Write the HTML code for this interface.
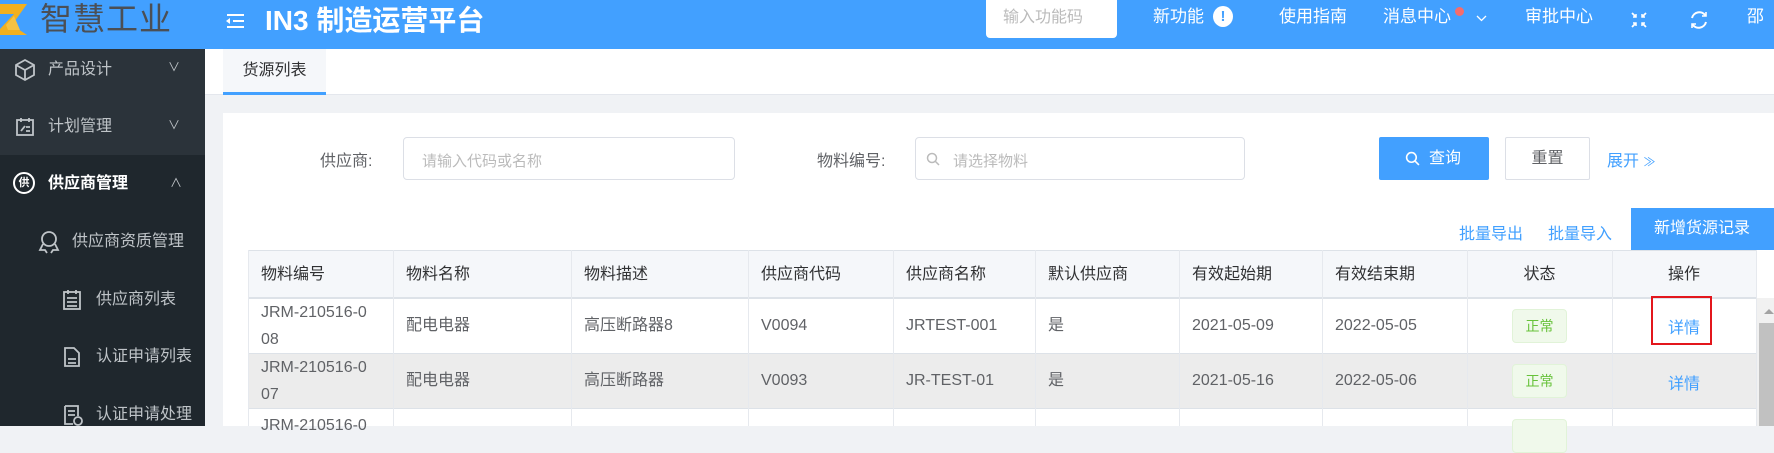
<!DOCTYPE html>
<html><head><meta charset="utf-8"><style>
*{box-sizing:border-box;margin:0;padding:0}
body{width:1774px;height:426px;overflow:hidden;position:relative;font-family:"Liberation Sans","Noto Sans CJK SC",sans-serif;background:#f0f2f5;color:#606266}
.a{position:absolute}
.hdr{left:0;top:0;width:1774px;height:49px;background:#42a0ff}
.side{left:0;top:49px;width:205px;height:377px;background:#1f272d}
.si{position:absolute;font-size:16px;color:#bfc4c8;line-height:20px}
.hi{position:absolute;color:#fff;font-size:17px;top:6px;line-height:22px}
.cell{position:absolute;font-size:16px;color:#606266;display:flex;align-items:center;padding-left:13px;line-height:27px}
.vl{position:absolute;width:1px;background:#e6e9ee}
.hl{position:absolute;height:1px;background:#dde2e8;left:248px;width:1508px}
</style></head><body>
<div class="a hdr"></div>
<svg class="a" style="left:0;top:3px" width="28" height="33" viewBox="0 0 28 33"><polygon points="0,1 27,1 12,22 27,32 0,32 0,26 14,11 0,11" fill="#f2b01e"/><polygon points="6,22 14,13 20,27 8,27" fill="#f5c242"/></svg>
<div class="a" style="left:40px;top:1px;font-size:32px;color:#4b4f55;line-height:36px;letter-spacing:1px">智慧工业</div>
<svg class="a" style="left:225px;top:14px" width="20" height="14" viewBox="0 0 20 14"><g stroke="#fff" stroke-width="2"><line x1="2" y1="1" x2="19" y2="1"/><line x1="8" y1="7" x2="19" y2="7"/><line x1="2" y1="13" x2="19" y2="13"/></g><polygon points="1,7 5,4 5,10" fill="#fff"/></svg>
<div class="a" style="left:265px;top:5px;font-size:28px;font-weight:bold;color:#fff;line-height:32px">IN3 制造运营平台</div>
<div class="a" style="left:986px;top:0;width:131px;height:38px;background:#fff;border-radius:0 0 4px 4px;color:#bbb;font-size:16px;line-height:36px;padding-left:17px">输入功能码</div>
<div class="hi" style="left:1153px">新功能</div>
<div class="a" style="left:1213px;top:6px;width:20px;height:21px;border-radius:50%;background:#fff;color:#42a0ff;font-weight:bold;font-size:15px;text-align:center;line-height:21px">!</div>
<div class="hi" style="left:1279px">使用指南</div>
<div class="hi" style="left:1383px">消息中心</div>
<div class="a" style="left:1455px;top:7px;width:9px;height:9px;border-radius:50%;background:#f56c6c"></div>
<svg class="a" style="left:1476px;top:15px" width="11" height="7" viewBox="0 0 11 7" fill="none" stroke="#fff" stroke-width="1.3"><path d="M1 1l4.5 4.5L10 1"/></svg>
<div class="hi" style="left:1525px">审批中心</div>
<svg class="a" style="left:1630px;top:11px" width="18" height="18" viewBox="0 0 18 18" fill="none" stroke="#fff" stroke-width="1.8"><path d="M2 2l4 4M16 2l-4 4M2 16l4-4M16 16l-4-4"/><path d="M6 3v3H3M12 3v3h3M6 15v-3H3M12 15v-3h3" stroke-width="1.5"/></svg>
<svg class="a" style="left:1688px;top:9px" width="22" height="22" viewBox="0 0 22 22" fill="none" stroke="#fff" stroke-width="2"><path d="M4 9A7.5 7.5 0 0 1 17.5 6.5M18 13A7.5 7.5 0 0 1 4.5 15.5"/><path d="M18 3v4h-4M4 19v-4h4" stroke-width="1.6"/></svg>
<div class="hi" style="left:1747px">邵</div>

<div class="a side"></div>
<div class="a" style="left:0;top:49px;width:205px;height:106px;background:#2b333a"></div>
<svg class="a" style="left:14px;top:58px" width="22" height="24" viewBox="0 0 22 24" fill="none" stroke="#bfc4c8" stroke-width="1.8"><path d="M11 2L20 7V17L11 22L2 17V7Z M2 7L11 12L20 7 M11 12V22"/></svg>
<div class="si" style="left:48px;top:60px">产品设计</div><div class="si" style="left:168px;top:57px;font-size:12px">∨</div>
<svg class="a" style="left:15px;top:117px" width="20" height="20" viewBox="0 0 20 20" fill="none" stroke="#bfc4c8" stroke-width="1.8"><rect x="2" y="3" width="16" height="15"/><path d="M6 1v4M14 1v4M6 14l4-5M11 10h4M11 14h4"/></svg>
<div class="si" style="left:48px;top:117px">计划管理</div><div class="si" style="left:168px;top:115px;font-size:12px">∨</div>
<div class="a" style="left:13px;top:172px;width:22px;height:22px;border:2px solid #fff;border-radius:50%;color:#fff;font-size:11px;text-align:center;line-height:18px;font-weight:bold">供</div>
<div class="si" style="left:48px;top:174px;color:#fff;font-weight:bold">供应商管理</div><div class="si" style="left:170px;top:172px;font-size:12px;transform:rotate(180deg)">∨</div>
<svg class="a" style="left:38px;top:230px" width="22" height="24" viewBox="0 0 22 24" fill="none" stroke="#bfc4c8" stroke-width="1.8"><circle cx="11" cy="9" r="7"/><path d="M5 14L2 20h5l2 3M17 14l3 6h-5l-2 3"/></svg>
<div class="si" style="left:72px;top:232px">供应商资质管理</div>
<svg class="a" style="left:62px;top:289px" width="20" height="22" viewBox="0 0 20 22" fill="none" stroke="#bfc4c8" stroke-width="1.8"><rect x="2" y="3" width="16" height="17"/><path d="M6 1v4M14 1v4M5 9h10M5 13h10M5 17h10"/></svg>
<div class="si" style="left:96px;top:290px">供应商列表</div>
<svg class="a" style="left:63px;top:346px" width="18" height="22" viewBox="0 0 18 22" fill="none" stroke="#bfc4c8" stroke-width="1.8"><path d="M2 2h9l5 5v13H2Z M5 13h8M5 17h8"/></svg>
<div class="si" style="left:96px;top:347px">认证申请列表</div>
<svg class="a" style="left:63px;top:404px" width="20" height="22" viewBox="0 0 20 22" fill="none" stroke="#bfc4c8" stroke-width="1.8"><path d="M2 2h13v10M2 2v18h8M5 7h7M5 11h7"/><circle cx="15" cy="17" r="4"/></svg>
<div class="si" style="left:96px;top:405px">认证申请处理</div>

<div class="a" style="left:205px;top:49px;width:1569px;height:46px;background:#fff;border-bottom:1px solid #e4e7ed"></div>
<div class="a" style="left:223px;top:49px;width:103px;height:46px;background:#f5f7fa;border-bottom:3px solid #42a0ff;font-size:16px;color:#303133;text-align:center;line-height:44px">货源列表</div>

<div class="a" style="left:223px;top:113px;width:1551px;height:313px;background:#fff"></div>
<div class="a" style="left:320px;top:147px;font-size:16px;color:#606266">供应商:</div>
<div class="a" style="left:403px;top:137px;width:332px;height:43px;border:1px solid #dcdfe6;border-radius:4px;font-size:15px;color:#bbb;padding:12px 0 0 18px">请输入代码或名称</div>
<div class="a" style="left:817px;top:147px;font-size:16px;color:#606266">物料编号:</div>
<div class="a" style="left:915px;top:137px;width:330px;height:43px;border:1px solid #dcdfe6;border-radius:4px;font-size:15px;color:#bbb;padding:12px 0 0 37px">请选择物料</div>
<svg class="a" style="left:926px;top:152px" width="14" height="14" viewBox="0 0 14 14" fill="none" stroke="#bbb" stroke-width="1.5"><circle cx="6" cy="6" r="4.5"/><path d="M9.5 9.5L13 13"/></svg>
<div class="a" style="left:1379px;top:137px;width:110px;height:43px;background:#42a0ff;border-radius:2px;color:#fff;font-size:16px;line-height:43px;padding-left:50px">查询</div>
<svg class="a" style="left:1405px;top:151px" width="15" height="15" viewBox="0 0 14 14" fill="none" stroke="#fff" stroke-width="1.5"><circle cx="6" cy="6" r="4.5"/><path d="M9.5 9.5L13 13"/></svg>
<div class="a" style="left:1505px;top:137px;width:85px;height:43px;border:1px solid #dcdfe6;border-radius:2px;color:#606266;font-size:16px;line-height:41px;text-align:center">重置</div>
<div class="a" style="left:1607px;top:147px;font-size:16px;color:#42a0ff">展开 <span style="font-size:12px">≫</span></div>

<div class="a" style="left:1459px;top:220px;font-size:16px;color:#42a0ff">批量导出</div>
<div class="a" style="left:1548px;top:220px;font-size:16px;color:#42a0ff">批量导入</div>
<div class="a" style="left:1631px;top:208px;width:143px;height:42px;background:#42a0ff;color:#fff;font-size:16px;line-height:42px;padding-left:23px">新增货源记录</div>

<div class="a" style="left:248px;top:250px;width:1508px;height:48px;background:#f5f7fa"></div>
<div class="a" style="left:248px;top:353px;width:1508px;height:55px;background:#ececec"></div>
<div class="hl" style="top:250px"></div><div class="hl" style="top:297px;height:2px"></div><div class="hl" style="top:353px"></div><div class="hl" style="top:408px"></div>
<div class="vl" style="left:248px;top:250px;height:176px"></div>
<div class="vl" style="left:393px;top:250px;height:176px"></div>
<div class="vl" style="left:571px;top:250px;height:176px"></div>
<div class="vl" style="left:748px;top:250px;height:176px"></div>
<div class="vl" style="left:893px;top:250px;height:176px"></div>
<div class="vl" style="left:1035px;top:250px;height:176px"></div>
<div class="vl" style="left:1179px;top:250px;height:176px"></div>
<div class="vl" style="left:1322px;top:250px;height:176px"></div>
<div class="vl" style="left:1467px;top:250px;height:176px"></div>
<div class="vl" style="left:1612px;top:250px;height:176px"></div>
<div class="vl" style="left:1756px;top:250px;height:176px"></div>

<div class="cell" style="left:248px;top:250px;height:48px;color:#303133">物料编号</div>
<div class="cell" style="left:393px;top:250px;height:48px;color:#303133">物料名称</div>
<div class="cell" style="left:571px;top:250px;height:48px;color:#303133">物料描述</div>
<div class="cell" style="left:748px;top:250px;height:48px;color:#303133">供应商代码</div>
<div class="cell" style="left:893px;top:250px;height:48px;color:#303133">供应商名称</div>
<div class="cell" style="left:1035px;top:250px;height:48px;color:#303133">默认供应商</div>
<div class="cell" style="left:1179px;top:250px;height:48px;color:#303133">有效起始期</div>
<div class="cell" style="left:1322px;top:250px;height:48px;color:#303133">有效结束期</div>
<div class="cell" style="left:1467px;top:250px;height:48px;width:145px;padding:0;justify-content:center;color:#303133">状态</div>
<div class="cell" style="left:1612px;top:250px;height:48px;width:144px;padding:0;justify-content:center;color:#303133">操作</div>

<div class="cell" style="left:248px;top:298px;height:55px">JRM-210516-0<br>08</div>
<div class="cell" style="left:393px;top:298px;height:55px">配电电器</div>
<div class="cell" style="left:571px;top:298px;height:55px">高压断路器8</div>
<div class="cell" style="left:748px;top:298px;height:55px">V0094</div>
<div class="cell" style="left:893px;top:298px;height:55px">JRTEST-001</div>
<div class="cell" style="left:1035px;top:298px;height:55px">是</div>
<div class="cell" style="left:1179px;top:298px;height:55px">2021-05-09</div>
<div class="cell" style="left:1322px;top:298px;height:55px">2022-05-05</div>

<div class="cell" style="left:248px;top:353px;height:55px">JRM-210516-0<br>07</div>
<div class="cell" style="left:393px;top:353px;height:55px">配电电器</div>
<div class="cell" style="left:571px;top:353px;height:55px">高压断路器</div>
<div class="cell" style="left:748px;top:353px;height:55px">V0093</div>
<div class="cell" style="left:893px;top:353px;height:55px">JR-TEST-01</div>
<div class="cell" style="left:1035px;top:353px;height:55px">是</div>
<div class="cell" style="left:1179px;top:353px;height:55px">2021-05-16</div>
<div class="cell" style="left:1322px;top:353px;height:55px">2022-05-06</div>
<div class="cell" style="left:248px;top:408px;height:30px;align-items:flex-start;padding-top:4px">JRM-210516-0</div>

<div class="a" style="left:1512px;top:309px;width:55px;height:34px;background:#f0f9eb;border:1px solid #e1f3d8;border-radius:4px;color:#67c23a;font-size:14px;text-align:center;line-height:32px">正常</div>
<div class="a" style="left:1512px;top:364px;width:55px;height:34px;background:#f0f9eb;border:1px solid #e1f3d8;border-radius:4px;color:#67c23a;font-size:14px;text-align:center;line-height:32px">正常</div>
<div class="a" style="left:1512px;top:419px;width:55px;height:34px;background:#f0f9eb;border:1px solid #e1f3d8;border-radius:4px"></div>
<div class="a" style="left:1651px;top:296px;width:61px;height:49px;border:2px solid #e3161c"></div>
<div class="a" style="left:1668px;top:314px;font-size:16px;color:#42a0ff">详情</div>
<div class="a" style="left:1668px;top:370px;font-size:16px;color:#42a0ff">详情</div>

<div class="a" style="left:1757px;top:298px;width:17px;height:128px;background:#f1f1f1"></div>
<div class="a" style="left:1759px;top:323px;width:15px;height:103px;background:#c1c1c1"></div>
<div class="a" style="left:1764px;top:309px;width:0;height:0;border-left:5px solid transparent;border-right:5px solid transparent;border-bottom:5px solid #a3a3a3"></div>
</body></html>
